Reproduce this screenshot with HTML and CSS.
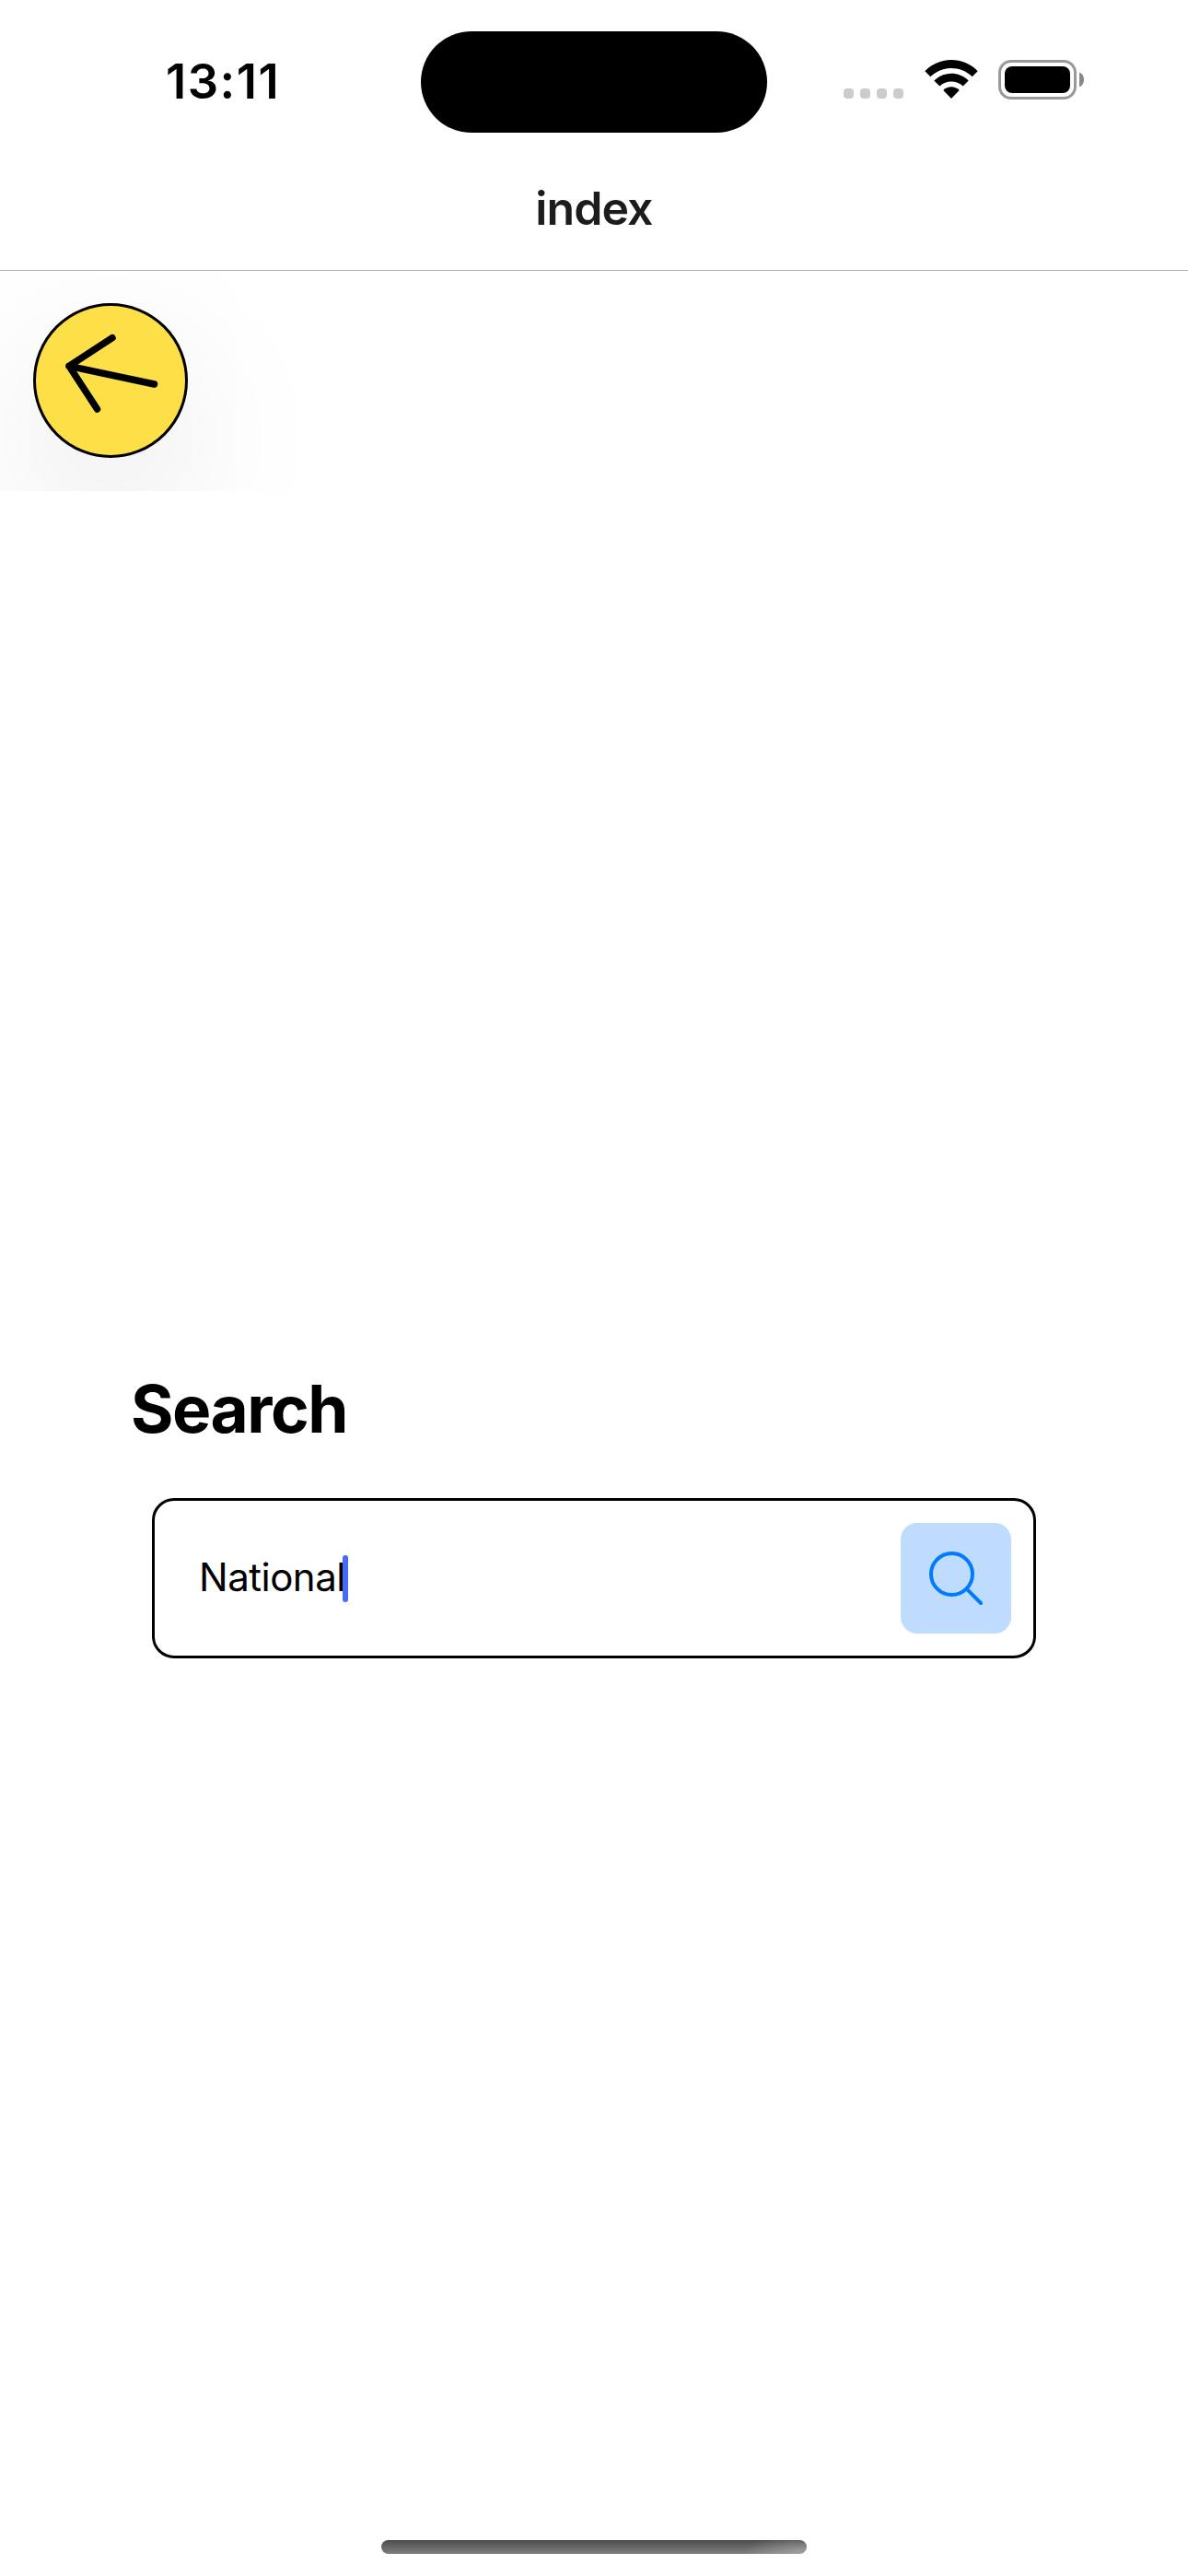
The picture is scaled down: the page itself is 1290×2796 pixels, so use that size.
FILE: index.html
```html
<!DOCTYPE html>
<html lang="en">
<head>
<meta charset="utf-8">
<title>index</title>
<link rel="stylesheet" href="styles.css">
</head>
<body>
<div class="screen">
  <div class="status-bar">
    <div class="clock"><span class="time">13:11</span></div>
    <div class="island"></div>
    <div class="indicators">
      <div class="cellular"><i class="dot"></i><i class="dot"></i><i class="dot"></i><i class="dot"></i></div>
      <svg class="wifi" width="58" height="43" viewBox="0 0 58 43">
        <path d="M.3 12.2C16-4 42-4 57.700 12.200L51.700 18.300C39 6 19 6 6.300 18.300Z"/>
        <path d="M10.300 22.500C21 12.300 37 12.300 47.700 22.500L41.700 28.500C34.500 21.800 23.500 21.800 16.300 28.500Z"/>
        <path d="M20.300 33C25 28 33 28 37.700 33L29 42Z"/>
      </svg>
      <div class="battery"><div class="battery-case"><div class="battery-level"></div></div><div class="battery-nub"></div></div>
    </div>
  </div>
  <header class="nav-bar"><span class="nav-title">index</span></header>
  <div class="toolbar">
    <button class="back" aria-label="Back">
      <svg width="162" height="162" viewBox="39 332 162 162">
        <path d="M122 366.700 75 397.300 105.500 444M75 397.300 167.500 417"/>
      </svg>
    </button>
  </div>
  <main class="content">
    <h1 class="heading">Search</h1>
    <div class="field">
      <div class="value"><span class="query">National</span><span class="caret"></span></div>
      <button class="go" aria-label="Search">
        <svg width="120" height="120" viewBox="0 0 120 120">
          <circle cx="55.500" cy="55.500" r="22.500"/>
          <path d="M71.700 71.700 87 87"/>
        </svg>
      </button>
    </div>
  </main>
  <footer class="home"><div class="home-indicator"></div></footer>
</div>
</body>
</html>
```
FILE: styles.css
```css
* { box-sizing: border-box; }
body { margin: 0; background: #fff; }
button { margin: 0; padding: 0; font: inherit; }
svg { display: block; }

.screen {
  display: flex;
  flex-direction: column;
  width: 1290px;
  height: 2796px;
  overflow: hidden;
  background: #fff;
  color: #000;
  font-family: Inter, "Liberation Sans", sans-serif;
}

.status-bar {
  display: grid;
  grid-template-columns: 457px 376px 457px;
  align-items: start;
  height: 177px;
  padding-top: 34px;
}
.clock { padding: 22.500px 0 0 180px; }
.time { display: block; font-size: 52.500px; line-height: 63px; font-weight: 600; letter-spacing: 1.500px; }
.island { height: 110px; border-radius: 55px; background: #000; }
.indicators { display: flex; align-items: flex-start; padding: 31px 0 0 83px; }
.cellular { display: flex; gap: 7px; margin: 31px 23px 0 0; }
.dot { width: 11px; height: 11px; border-radius: 4px; background: #ccc; }
.wifi { margin-right: 22px; fill: #000; }
.battery { display: flex; align-items: center; gap: 3px; }
.battery-case { width: 85px; height: 43px; padding: 4px; border: 3px solid #999; border-radius: 14px; }
.battery-level { height: 29px; border-radius: 8px; background: #000; }
.battery-nub { width: 5px; height: 15px; border-radius: 0 5px 5px 0 / 0 7.500px 7.500px 0; background: #888; }

.nav-bar {
  display: flex;
  justify-content: center;
  height: 117px;
  padding-top: 18px;
  border-bottom: 1px solid #b0b0b0;
  color: #1c1c1e;
}
.nav-title { font-size: 50px; line-height: 62px; font-weight: 600; letter-spacing: -.900px; }

.toolbar { height: 239px; padding: 35px 36px; overflow: hidden; }
.back {
  display: block;
  width: 168px;
  height: 168px;
  border: 3px solid #000;
  border-radius: 50%;
  background: #fde047;
  box-shadow: 0 60px 170px rgba(0, 0, 0, .1);
}
.back path { fill: none; stroke: #000; stroke-width: 7.500px; stroke-linecap: round; stroke-linejoin: round; }

.content { flex: 1; padding: 953px 165px 0; }
.heading { margin: 0 0 53px -23px; font-size: 71px; line-height: 87px; font-weight: 700; letter-spacing: -1.500px; }
.field {
  display: flex;
  align-items: center;
  justify-content: space-between;
  height: 174px;
  padding: 0 24px 0 48px;
  border: 3px solid #000;
  border-radius: 24px;
}
.value { display: flex; align-items: center; }
.query { padding-bottom: 3px; font-size: 42px; line-height: 51px; letter-spacing: -.500px; }
.caret { width: 6px; height: 51px; margin-left: -3px; border-radius: 3px; background: #456bf5; z-index: 1; }
.go { width: 120px; height: 120px; border: 0; border-radius: 18px; background: #bfdbfe; }
.go svg { fill: none; stroke: #007aff; stroke-width: 4px; stroke-linecap: round; }

.home { display: flex; justify-content: center; height: 39px; }
.home-indicator {
  width: 462px;
  height: 15px;
  border-radius: 7.500px;
  background:
    radial-gradient(ellipse 70px 22px at 100% 100%, rgba(190, 190, 190, .6), rgba(190, 190, 190, 0)),
    linear-gradient(#4c4c4c, #7e7e7e);
}
```
